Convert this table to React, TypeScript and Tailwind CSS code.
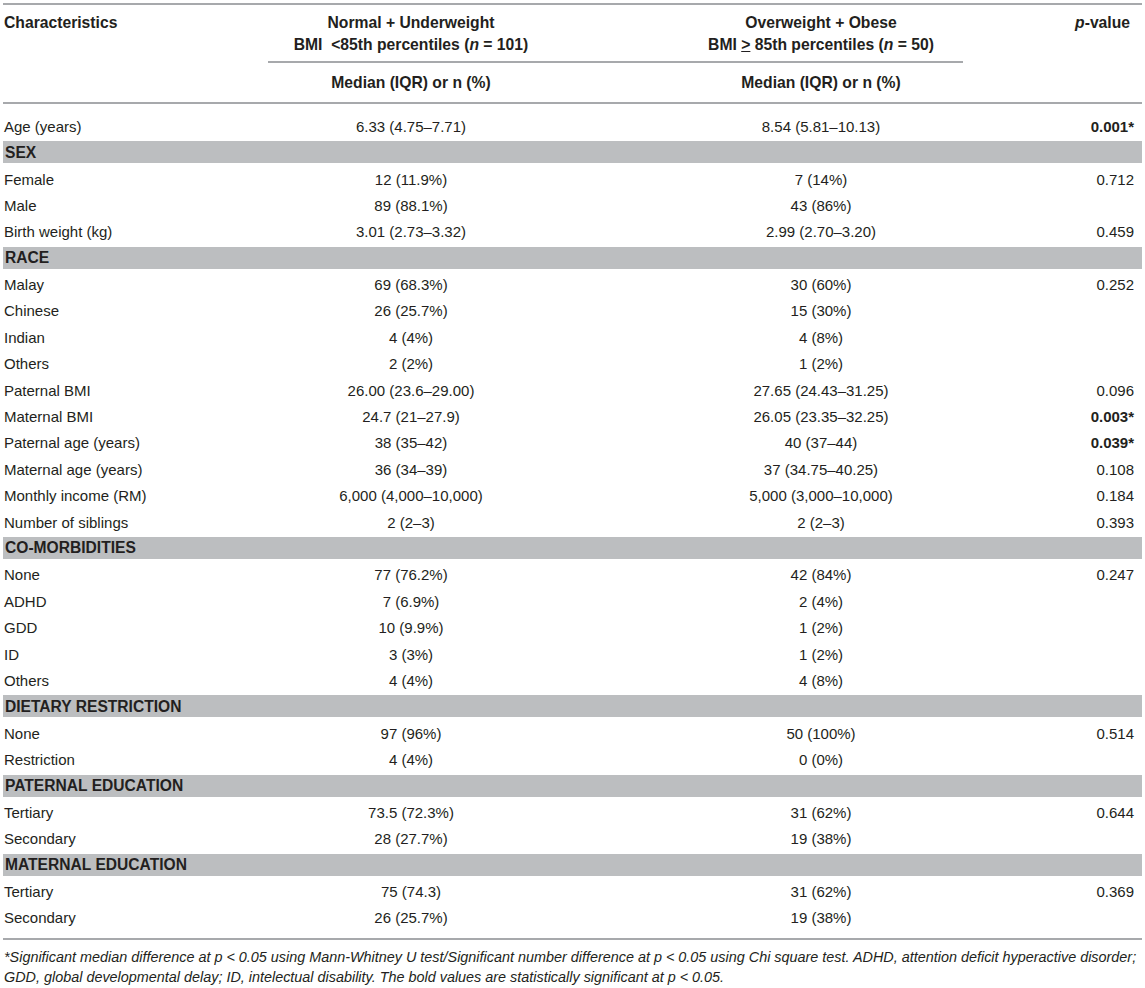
type Row =
    | { kind: 'section'; label: string }
    | { kind: 'data'; label: string; a: string; b: string; p?: string; bold?: boolean };

const rows: Row[] = [
    { kind: 'data', label: 'Age (years)', a: '6.33 (4.75–7.71)', b: '8.54 (5.81–10.13)', p: '0.001*', bold: true },
    { kind: 'section', label: 'SEX' },
    { kind: 'data', label: 'Female', a: '12 (11.9%)', b: '7 (14%)', p: '0.712' },
    { kind: 'data', label: 'Male', a: '89 (88.1%)', b: '43 (86%)' },
    { kind: 'data', label: 'Birth weight (kg)', a: '3.01 (2.73–3.32)', b: '2.99 (2.70–3.20)', p: '0.459' },
    { kind: 'section', label: 'RACE' },
    { kind: 'data', label: 'Malay', a: '69 (68.3%)', b: '30 (60%)', p: '0.252' },
    { kind: 'data', label: 'Chinese', a: '26 (25.7%)', b: '15 (30%)' },
    { kind: 'data', label: 'Indian', a: '4 (4%)', b: '4 (8%)' },
    { kind: 'data', label: 'Others', a: '2 (2%)', b: '1 (2%)' },
    { kind: 'data', label: 'Paternal BMI', a: '26.00 (23.6–29.00)', b: '27.65 (24.43–31.25)', p: '0.096' },
    { kind: 'data', label: 'Maternal BMI', a: '24.7 (21–27.9)', b: '26.05 (23.35–32.25)', p: '0.003*', bold: true },
    { kind: 'data', label: 'Paternal age (years)', a: '38 (35–42)', b: '40 (37–44)', p: '0.039*', bold: true },
    { kind: 'data', label: 'Maternal age (years)', a: '36 (34–39)', b: '37 (34.75–40.25)', p: '0.108' },
    { kind: 'data', label: 'Monthly income (RM)', a: '6,000 (4,000–10,000)', b: '5,000 (3,000–10,000)', p: '0.184' },
    { kind: 'data', label: 'Number of siblings', a: '2 (2–3)', b: '2 (2–3)', p: '0.393' },
    { kind: 'section', label: 'CO-MORBIDITIES' },
    { kind: 'data', label: 'None', a: '77 (76.2%)', b: '42 (84%)', p: '0.247' },
    { kind: 'data', label: 'ADHD', a: '7 (6.9%)', b: '2 (4%)' },
    { kind: 'data', label: 'GDD', a: '10 (9.9%)', b: '1 (2%)' },
    { kind: 'data', label: 'ID', a: '3 (3%)', b: '1 (2%)' },
    { kind: 'data', label: 'Others', a: '4 (4%)', b: '4 (8%)' },
    { kind: 'section', label: 'DIETARY RESTRICTION' },
    { kind: 'data', label: 'None', a: '97 (96%)', b: '50 (100%)', p: '0.514' },
    { kind: 'data', label: 'Restriction', a: '4 (4%)', b: '0 (0%)' },
    { kind: 'section', label: 'PATERNAL EDUCATION' },
    { kind: 'data', label: 'Tertiary', a: '73.5 (72.3%)', b: '31 (62%)', p: '0.644' },
    { kind: 'data', label: 'Secondary', a: '28 (27.7%)', b: '19 (38%)' },
    { kind: 'section', label: 'MATERNAL EDUCATION' },
    { kind: 'data', label: 'Tertiary', a: '75 (74.3)', b: '31 (62%)', p: '0.369' },
    { kind: 'data', label: 'Secondary', a: '26 (25.7%)', b: '19 (38%)' },
];

const cols = 'grid grid-cols-[265px_286px_125px_284px_179px]';

export default function App() {
    return (
        <div className="w-[1145px] min-h-[988px] bg-white pt-[3px] text-[15px] text-[#231f20] font-['Liberation_Sans',Arial,sans-serif]">
            <div className="ml-[3px] w-[1139px]">
                {/* Top rule */}
                <div className="h-[2px] bg-[#a7a9ac]" />

                {/* Header */}
                <div className={`${cols} font-bold text-[15.7px] leading-[22px]`}>
                    <div className="pl-[1px] pt-[7px]">Characteristics</div>
                    <div className="col-span-2 pt-[7px] pb-[5px] pr-[125px] text-center whitespace-nowrap">
                        <div>Normal + Underweight</div>
                        <div>
                            BMI &nbsp;&lt;85th percentiles (<span className="italic">n</span> = 101)
                        </div>
                    </div>
                    <div className="pt-[7px] pb-[5px] text-center whitespace-nowrap">
                        <div>Overweight + Obese</div>
                        <div>
                            BMI <span className="underline">&gt;</span> 85th percentiles (<span className="italic">n</span> = 50)
                        </div>
                    </div>
                    <div className="pt-[7px] pr-[12px] text-right">
                        <span className="italic">p</span>-value
                    </div>

                    <div />
                    <div className="col-span-3 h-[2px] bg-[#a7a9ac]" />
                    <div />

                    <div />
                    <div className="pt-[9px] pb-[8px] text-center">Median (IQR) or n (%)</div>
                    <div />
                    <div className="pt-[9px] pb-[8px] text-center">Median (IQR) or n (%)</div>
                    <div />
                </div>
                <div className="h-[2px] bg-[#a7a9ac]" />

                {/* Body */}
                <div className="pt-[9.8px] pb-[6px]">
                    {rows.map((row, i) =>
                        row.kind === 'section' ? (
                            <div key={i} className="h-[26.4px] pt-[1px]">
                                <div className="h-[22px] bg-[#bcbec0] pl-[2px] flex items-center font-bold text-[15.6px]">
                                    {row.label}
                                </div>
                            </div>
                        ) : (
                            <div key={i} className={`${cols} h-[26.4px] items-center whitespace-nowrap`}>
                                <div className="pl-[1px]">{row.label}</div>
                                <div className="text-center">{row.a}</div>
                                <div />
                                <div className="text-center">{row.b}</div>
                                <div className={`pr-[8px] text-right ${row.bold ? 'font-bold' : ''}`}>{row.p}</div>
                            </div>
                        )
                    )}
                </div>
                <div className="h-[2px] bg-[#a7a9ac]" />

                {/* Footnote */}
                <p className="pt-[7px] pl-[1px] text-[14.4px] leading-[20px] italic whitespace-nowrap">
                    *Significant median difference at p &lt; 0.05 using Mann-Whitney U test/Significant number difference at p &lt; 0.05 using Chi square test. ADHD, attention deficit hyperactive disorder;
                    <br />
                    GDD, global developmental delay; ID, intelectual disability. The bold values are statistically significant at p &lt; 0.05.
                </p>
            </div>
        </div>
    );
}
